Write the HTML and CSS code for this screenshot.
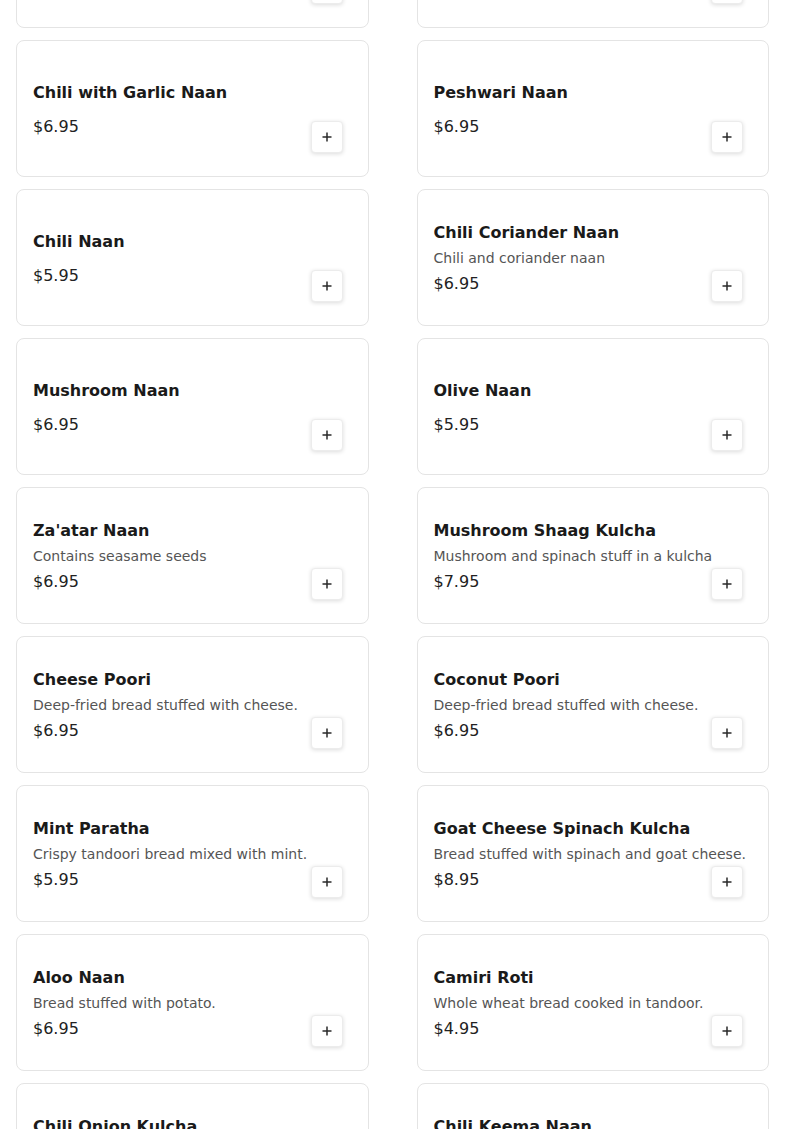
FILE: index.html
```html
<!DOCTYPE html>
<html lang="en">
<head>
<meta charset="utf-8">
<title>Menu</title>
<link rel="stylesheet" href="styles.css">
</head>
<body>
<main class="menu">
  <div class="card"><div class="info"><h3 class="title">Garlic Naan</h3><p class="price">$5.95</p></div><button class="add" aria-label="Add"><svg viewBox="0 0 10 10"><path d="M5 0.5V9.5M0.5 5H9.5"/></svg></button></div>
  <div class="card"><div class="info"><h3 class="title">Onion Naan</h3><p class="price">$5.95</p></div><button class="add" aria-label="Add"><svg viewBox="0 0 10 10"><path d="M5 0.5V9.5M0.5 5H9.5"/></svg></button></div>

  <div class="card"><div class="info"><h3 class="title">Chili with Garlic Naan</h3><p class="price">$6.95</p></div><button class="add" aria-label="Add"><svg viewBox="0 0 10 10"><path d="M5 0.5V9.5M0.5 5H9.5"/></svg></button></div>
  <div class="card"><div class="info"><h3 class="title">Peshwari Naan</h3><p class="price">$6.95</p></div><button class="add" aria-label="Add"><svg viewBox="0 0 10 10"><path d="M5 0.5V9.5M0.5 5H9.5"/></svg></button></div>

  <div class="card"><div class="info"><h3 class="title">Chili Naan</h3><p class="price">$5.95</p></div><button class="add" aria-label="Add"><svg viewBox="0 0 10 10"><path d="M5 0.5V9.5M0.5 5H9.5"/></svg></button></div>
  <div class="card"><div class="info"><h3 class="title">Chili Coriander Naan</h3><p class="desc">Chili and coriander naan</p><p class="price">$6.95</p></div><button class="add" aria-label="Add"><svg viewBox="0 0 10 10"><path d="M5 0.5V9.5M0.5 5H9.5"/></svg></button></div>

  <div class="card"><div class="info"><h3 class="title">Mushroom Naan</h3><p class="price">$6.95</p></div><button class="add" aria-label="Add"><svg viewBox="0 0 10 10"><path d="M5 0.5V9.5M0.5 5H9.5"/></svg></button></div>
  <div class="card"><div class="info"><h3 class="title">Olive Naan</h3><p class="price">$5.95</p></div><button class="add" aria-label="Add"><svg viewBox="0 0 10 10"><path d="M5 0.5V9.5M0.5 5H9.5"/></svg></button></div>

  <div class="card"><div class="info"><h3 class="title">Za'atar Naan</h3><p class="desc">Contains seasame seeds</p><p class="price">$6.95</p></div><button class="add" aria-label="Add"><svg viewBox="0 0 10 10"><path d="M5 0.5V9.5M0.5 5H9.5"/></svg></button></div>
  <div class="card"><div class="info"><h3 class="title">Mushroom Shaag Kulcha</h3><p class="desc">Mushroom and spinach stuff in a kulcha</p><p class="price">$7.95</p></div><button class="add" aria-label="Add"><svg viewBox="0 0 10 10"><path d="M5 0.5V9.5M0.5 5H9.5"/></svg></button></div>

  <div class="card"><div class="info"><h3 class="title">Cheese Poori</h3><p class="desc">Deep-fried bread stuffed with cheese.</p><p class="price">$6.95</p></div><button class="add" aria-label="Add"><svg viewBox="0 0 10 10"><path d="M5 0.5V9.5M0.5 5H9.5"/></svg></button></div>
  <div class="card"><div class="info"><h3 class="title">Coconut Poori</h3><p class="desc">Deep-fried bread stuffed with cheese.</p><p class="price">$6.95</p></div><button class="add" aria-label="Add"><svg viewBox="0 0 10 10"><path d="M5 0.5V9.5M0.5 5H9.5"/></svg></button></div>

  <div class="card"><div class="info"><h3 class="title">Mint Paratha</h3><p class="desc">Crispy tandoori bread mixed with mint.</p><p class="price">$5.95</p></div><button class="add" aria-label="Add"><svg viewBox="0 0 10 10"><path d="M5 0.5V9.5M0.5 5H9.5"/></svg></button></div>
  <div class="card"><div class="info"><h3 class="title">Goat Cheese Spinach Kulcha</h3><p class="desc">Bread stuffed with spinach and goat cheese.</p><p class="price">$8.95</p></div><button class="add" aria-label="Add"><svg viewBox="0 0 10 10"><path d="M5 0.5V9.5M0.5 5H9.5"/></svg></button></div>

  <div class="card"><div class="info"><h3 class="title">Aloo Naan</h3><p class="desc">Bread stuffed with potato.</p><p class="price">$6.95</p></div><button class="add" aria-label="Add"><svg viewBox="0 0 10 10"><path d="M5 0.5V9.5M0.5 5H9.5"/></svg></button></div>
  <div class="card"><div class="info"><h3 class="title">Camiri Roti</h3><p class="desc">Whole wheat bread cooked in tandoor.</p><p class="price">$4.95</p></div><button class="add" aria-label="Add"><svg viewBox="0 0 10 10"><path d="M5 0.5V9.5M0.5 5H9.5"/></svg></button></div>

  <div class="card"><div class="info"><h3 class="title">Chili Onion Kulcha</h3><p class="desc">Kulcha stuffed with chili and onion.</p><p class="price">$6.95</p></div><button class="add" aria-label="Add"><svg viewBox="0 0 10 10"><path d="M5 0.5V9.5M0.5 5H9.5"/></svg></button></div>
  <div class="card"><div class="info"><h3 class="title">Chili Keema Naan</h3><p class="desc">Naan stuffed with spicy minced lamb.</p><p class="price">$8.95</p></div><button class="add" aria-label="Add"><svg viewBox="0 0 10 10"><path d="M5 0.5V9.5M0.5 5H9.5"/></svg></button></div>
</main>
</body>
</html>
```

FILE: styles.css
```css
html, body {
  margin: 0;
  padding: 0;
  background: #ffffff;
  font-family: "DejaVu Sans", "Liberation Sans", sans-serif;
  color: #1a1a1a;
  overflow: hidden;
}

.menu {
  display: grid;
  grid-template-columns: 1fr 1fr;
  column-gap: 48px;
  row-gap: 12px;
  padding: 0 16px;
  margin-top: -109px;
}

.card {
  position: relative;
  box-sizing: border-box;
  height: 137px;
  display: flex;
  align-items: center;
  padding: 16px;
  border: 1px solid #e4e4e4;
  border-radius: 8px;
  background: #ffffff;
}

.info {
  display: flex;
  flex-direction: column;
  min-width: 0;
  margin-top: 2px;
}

.title {
  margin: 0;
  font-size: 16px;
  line-height: 24px;
  font-weight: bold;
  color: #1a1a1a;
}

.desc {
  margin: 3px 0 0;
  font-size: 14px;
  line-height: 20px;
  color: #555555;
  white-space: nowrap;
}

.price {
  margin: 4px 0 0;
  font-size: 16px;
  line-height: 24px;
  color: #222222;
}

.title + .price {
  margin-top: 10px;
}

.add {
  position: absolute;
  right: 25px;
  bottom: 23px;
  width: 32px;
  height: 32px;
  padding: 0;
  display: flex;
  align-items: center;
  justify-content: center;
  background: #ffffff;
  border: 1px solid #ececec;
  border-radius: 4px;
  box-shadow: 0 1px 4px rgba(0, 0, 0, 0.14);
  cursor: pointer;
}

.add svg {
  width: 10px;
  height: 10px;
  fill: none;
  stroke: #2a2a2a;
  stroke-width: 1.5;
}
```
